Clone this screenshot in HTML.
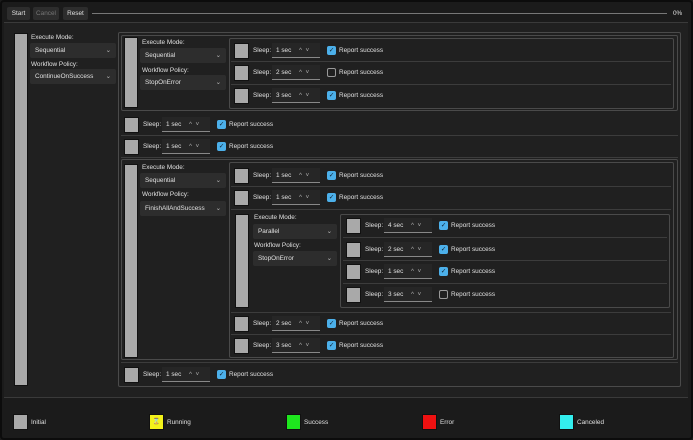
<!DOCTYPE html><html><head><style>
*{box-sizing:border-box;margin:0;padding:0}
body{width:693px;height:440px;background:#1b1b1b;font-family:"Liberation Sans",sans-serif;font-size:6.4px;color:#e0e0e0;position:relative;overflow:hidden}
.frame{position:absolute;left:0;top:0;width:693px;height:440px;border:2px solid #0c0c0c;border-radius:4px;pointer-events:none}
.a{position:absolute}
.btn{position:absolute;top:7px;height:13px;background:#2d2d2d;border-radius:2px;line-height:13px;text-align:center}
.box{position:absolute;border:1px solid #4a4a4a;border-radius:2px}
.bar{position:absolute;background:#a9a9a9;border:1px solid #111}
.lbl{position:absolute;white-space:nowrap}
.cb{position:absolute;height:15px;background:#2d2d2d;border-radius:2px;line-height:15px;padding-left:5px;white-space:nowrap}
.cb i{position:absolute;right:5px;top:0;font-style:normal;color:#bbb}
.row{position:absolute;width:10px;height:16px}
.row .sq{position:absolute;left:0;top:0;width:15px;height:16px;background:#a9a9a9;border:1px solid #111}
.row .s{position:absolute;left:19px;top:4px}
.row .sp{position:absolute;left:38px;top:0;width:48px;height:15px;background:#262626;border-bottom:1px solid #888;line-height:15px;padding-left:4px;white-space:nowrap}
.row .sp b{position:absolute;left:27px;font-weight:normal;color:#aaa}
.row .ck{position:absolute;left:93px;top:3px;width:9px;height:9px;border-radius:2px;background:#4cb0ea;color:#102030;line-height:9px;text-align:center}
.row .ck.off{background:transparent;border:1px solid #999}
.row .t{position:absolute;left:105px;top:4px;white-space:nowrap}
.hl{position:absolute;height:1px;background:#3c3c3c}
</style></head><body>
<div class="btn" style="left:7px;width:23px">Start</div>
<div class="btn" style="left:33px;width:26px;color:#777">Cancel</div>
<div class="btn" style="left:63px;width:25px">Reset</div>
<div class="a" style="left:92px;top:13px;width:575px;height:1px;background:#777"></div>
<div class="lbl" style="left:673px;top:10px">0%</div>
<div class="a" style="left:4px;top:22px;width:684px;height:376px;background:#202020;border-top:1px solid #3a3a3a;border-bottom:1px solid #3a3a3a"></div>

<div class="bar" style="left:14px;top:33px;width:14px;height:353px"></div>
<div class="lbl" style="left:31px;top:34px">Execute Mode:</div>
<div class="cb" style="left:30px;top:43px;width:86px">Sequential<i>⌄</i></div>
<div class="lbl" style="left:31px;top:61px">Workflow Policy:</div>
<div class="cb" style="left:30px;top:69px;width:86px">ContinueOnSuccess<i>⌄</i></div>

<div class="box" style="left:118px;top:32px;width:563px;height:355px"></div>
<div class="box" style="left:121px;top:35px;width:557px;height:76px"></div>
<div class="bar" style="left:124px;top:37px;width:14px;height:71px"></div>
<div class="lbl" style="left:142px;top:39px">Execute Mode:</div>
<div class="cb" style="left:140px;top:48px;width:86px">Sequential<i>⌄</i></div>
<div class="lbl" style="left:142px;top:67px">Workflow Policy:</div>
<div class="cb" style="left:140px;top:75px;width:86px">StopOnError<i>⌄</i></div>
<div class="box" style="left:229px;top:38px;width:445px;height:71px"></div>
<div class="row" style="left:234px;top:43px"><div class="sq"></div><div class="s">Sleep:</div><div class="sp">1 sec<b>^&nbsp;&nbsp;˅</b></div><div class="ck">✓</div><div class="t">Report success</div></div>
<div class="hl" style="left:231px;top:61px;width:440px"></div>
<div class="row" style="left:234px;top:65px"><div class="sq"></div><div class="s">Sleep:</div><div class="sp">2 sec<b>^&nbsp;&nbsp;˅</b></div><div class="ck off"></div><div class="t">Report success</div></div>
<div class="hl" style="left:231px;top:84px;width:440px"></div>
<div class="row" style="left:234px;top:88px"><div class="sq"></div><div class="s">Sleep:</div><div class="sp">3 sec<b>^&nbsp;&nbsp;˅</b></div><div class="ck">✓</div><div class="t">Report success</div></div>

<div class="row" style="left:124px;top:117px"><div class="sq"></div><div class="s">Sleep:</div><div class="sp">1 sec<b>^&nbsp;&nbsp;˅</b></div><div class="ck">✓</div><div class="t">Report success</div></div>
<div class="hl" style="left:121px;top:135px;width:557px"></div>
<div class="row" style="left:124px;top:139px"><div class="sq"></div><div class="s">Sleep:</div><div class="sp">1 sec<b>^&nbsp;&nbsp;˅</b></div><div class="ck">✓</div><div class="t">Report success</div></div>
<div class="hl" style="left:121px;top:157px;width:557px"></div>

<div class="box" style="left:121px;top:159px;width:557px;height:201px"></div>
<div class="bar" style="left:124px;top:164px;width:14px;height:194px"></div>
<div class="lbl" style="left:142px;top:164px">Execute Mode:</div>
<div class="cb" style="left:140px;top:173px;width:86px">Sequential<i>⌄</i></div>
<div class="lbl" style="left:142px;top:191px">Workflow Policy:</div>
<div class="cb" style="left:140px;top:201px;width:86px">FinishAllAndSuccess<i>⌄</i></div>
<div class="box" style="left:229px;top:162px;width:445px;height:196px"></div>
<div class="row" style="left:234px;top:168px"><div class="sq"></div><div class="s">Sleep:</div><div class="sp">1 sec<b>^&nbsp;&nbsp;˅</b></div><div class="ck">✓</div><div class="t">Report success</div></div>
<div class="hl" style="left:231px;top:186px;width:440px"></div>
<div class="row" style="left:234px;top:190px"><div class="sq"></div><div class="s">Sleep:</div><div class="sp">1 sec<b>^&nbsp;&nbsp;˅</b></div><div class="ck">✓</div><div class="t">Report success</div></div>
<div class="hl" style="left:231px;top:209px;width:440px"></div>

<div class="bar" style="left:235px;top:214px;width:14px;height:94px"></div>
<div class="lbl" style="left:254px;top:214px">Execute Mode:</div>
<div class="cb" style="left:253px;top:224px;width:84px">Parallel<i>⌄</i></div>
<div class="lbl" style="left:254px;top:242px">Workflow Policy:</div>
<div class="cb" style="left:253px;top:251px;width:84px">StopOnError<i>⌄</i></div>
<div class="box" style="left:340px;top:214px;width:330px;height:94px"></div>
<div class="row" style="left:346px;top:218px"><div class="sq"></div><div class="s">Sleep:</div><div class="sp">4 sec<b>^&nbsp;&nbsp;˅</b></div><div class="ck">✓</div><div class="t">Report success</div></div>
<div class="hl" style="left:343px;top:237px;width:324px"></div>
<div class="row" style="left:346px;top:242px"><div class="sq"></div><div class="s">Sleep:</div><div class="sp">2 sec<b>^&nbsp;&nbsp;˅</b></div><div class="ck">✓</div><div class="t">Report success</div></div>
<div class="hl" style="left:343px;top:260px;width:324px"></div>
<div class="row" style="left:346px;top:264px"><div class="sq"></div><div class="s">Sleep:</div><div class="sp">1 sec<b>^&nbsp;&nbsp;˅</b></div><div class="ck">✓</div><div class="t">Report success</div></div>
<div class="hl" style="left:343px;top:283px;width:324px"></div>
<div class="row" style="left:346px;top:287px"><div class="sq"></div><div class="s">Sleep:</div><div class="sp">3 sec<b>^&nbsp;&nbsp;˅</b></div><div class="ck off"></div><div class="t">Report success</div></div>
<div class="hl" style="left:231px;top:312px;width:440px"></div>
<div class="row" style="left:234px;top:316px"><div class="sq"></div><div class="s">Sleep:</div><div class="sp">2 sec<b>^&nbsp;&nbsp;˅</b></div><div class="ck">✓</div><div class="t">Report success</div></div>
<div class="hl" style="left:231px;top:334px;width:440px"></div>
<div class="row" style="left:234px;top:338px"><div class="sq"></div><div class="s">Sleep:</div><div class="sp">3 sec<b>^&nbsp;&nbsp;˅</b></div><div class="ck">✓</div><div class="t">Report success</div></div>
<div class="hl" style="left:121px;top:362px;width:557px"></div>
<div class="row" style="left:124px;top:367px"><div class="sq"></div><div class="s">Sleep:</div><div class="sp">1 sec<b>^&nbsp;&nbsp;˅</b></div><div class="ck">✓</div><div class="t">Report success</div></div>

<div class="a" style="left:13px;top:414px;width:15px;height:16px;background:#a9a9a9;border:1px solid #111"></div><div class="lbl" style="left:31px;top:419px">Initial</div>
<div class="a" style="left:149px;top:414px;width:15px;height:16px;background:#f2f21a;border:1px solid #111;color:#665;font-size:6px;text-align:center;line-height:14px">⌛</div><div class="lbl" style="left:167px;top:419px">Running</div>
<div class="a" style="left:286px;top:414px;width:15px;height:16px;background:#1ee61e;border:1px solid #111"></div><div class="lbl" style="left:304px;top:419px">Success</div>
<div class="a" style="left:422px;top:414px;width:15px;height:16px;background:#ee1111;border:1px solid #111"></div><div class="lbl" style="left:440px;top:419px">Error</div>
<div class="a" style="left:559px;top:414px;width:15px;height:16px;background:#33eeee;border:1px solid #111"></div><div class="lbl" style="left:577px;top:419px">Canceled</div>
<div class="frame"></div>
</body></html>
